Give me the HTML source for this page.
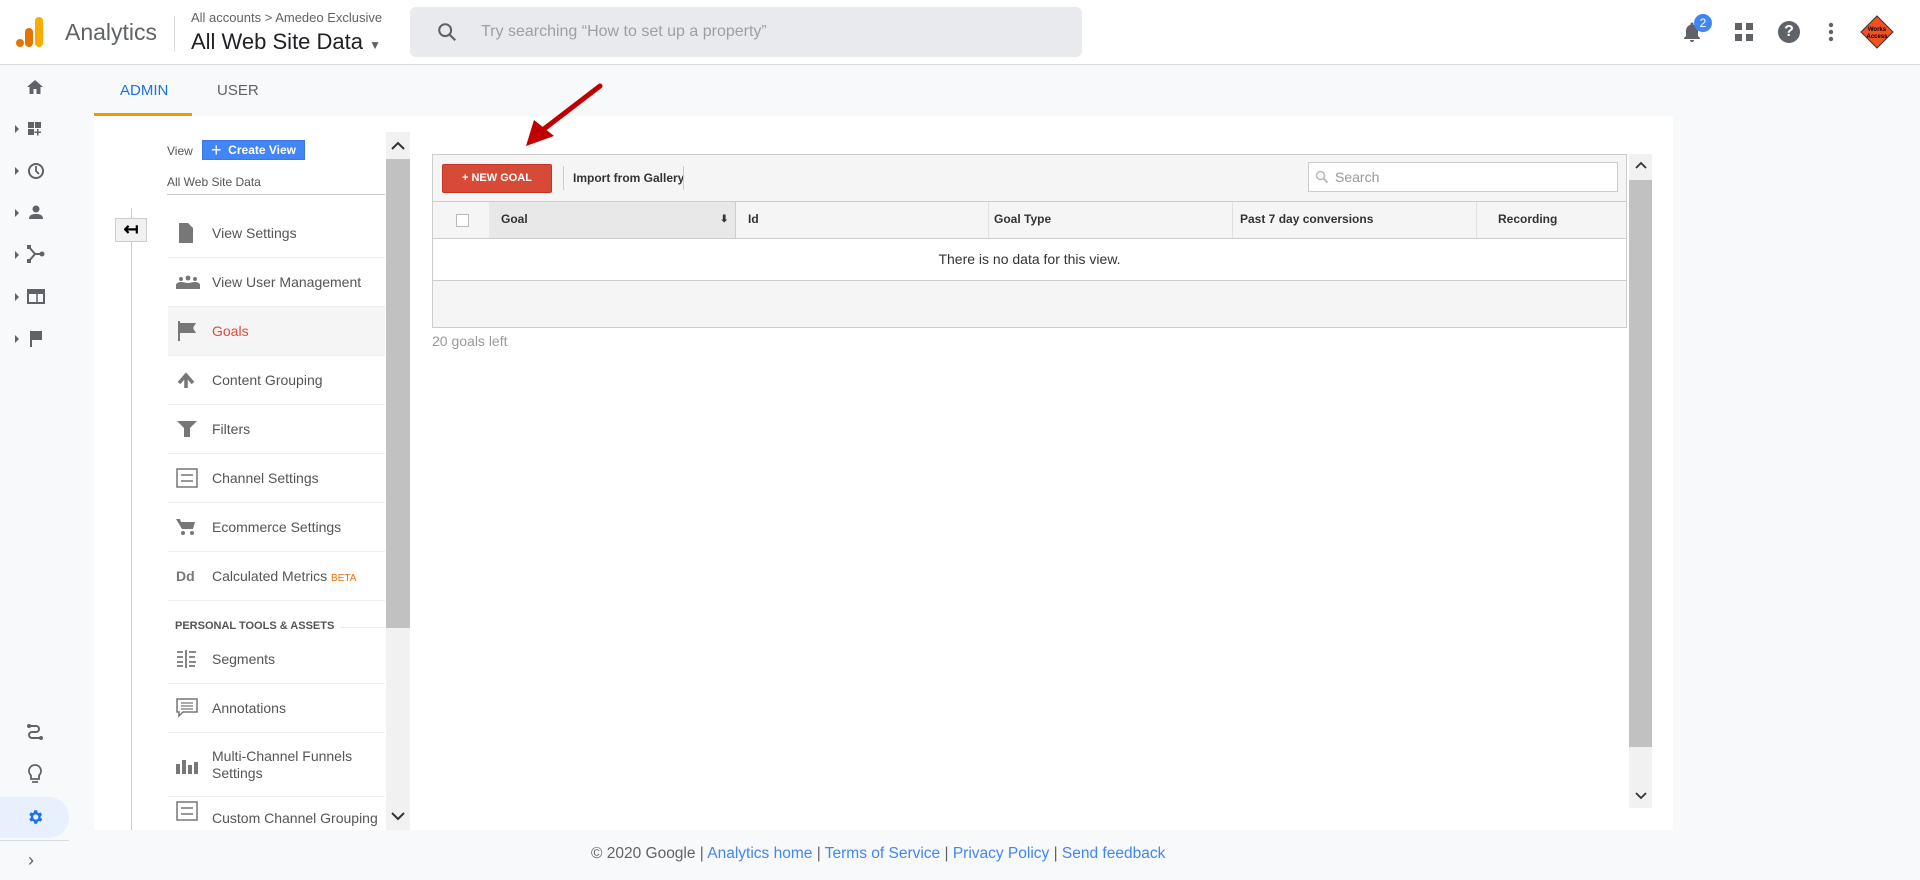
<!DOCTYPE html>
<html><head><meta charset="utf-8"><style>
*{box-sizing:border-box;margin:0;padding:0}
body{width:1920px;height:880px;overflow:hidden;background:#f8f9fa;font-family:"Liberation Sans",Arial,sans-serif;position:relative;color:#333}
.a{position:absolute}
.hdr{left:0;top:0;width:1920px;height:65px;background:#fff;border-bottom:1px solid #dadce0}
.mi{position:absolute;left:168px;width:217px;height:49px;border-bottom:1px solid #eee;font-size:14px;color:#555}
.mi span{position:absolute;left:44px;top:50%;transform:translateY(-50%)}
.mi svg{position:absolute;left:8px;top:50%;transform:translateY(-50%)}
.th{position:absolute;top:201px;height:37px;line-height:37px;font-size:12px;font-weight:bold;color:#333}
.ft a{color:#4285f4;text-decoration:none}
</style></head><body>
<div class="a hdr"></div>
<svg class="a" style="left:16px;top:17px" width="28" height="30" viewBox="0 0 28 30"><rect x="19" y="0" width="8" height="30" rx="4" fill="#f9ab00"/><rect x="9" y="11" width="8" height="19" rx="4" fill="#e37400"/><circle cx="4" cy="26" r="4" fill="#e37400"/></svg>
<div class="a" style="left:65px;top:19px;font-size:23px;color:#5f6368">Analytics</div>
<div class="a" style="left:174px;top:16px;width:1px;height:36px;background:#dadce0"></div>
<div class="a" style="left:191px;top:10px;font-size:13px;color:#5f6368">All accounts &gt; Amedeo Exclusive</div>
<div class="a" style="left:191px;top:29px;font-size:22px;color:#202124">All Web Site Data <span style="font-size:12px;color:#5f6368">▼</span></div>
<div class="a" style="left:410px;top:7px;width:672px;height:50px;background:#e8eaed;border-radius:6px"></div>
<svg class="a" style="left:436px;top:21px" width="22" height="22" viewBox="0 0 24 24"><circle cx="10" cy="10" r="6.5" stroke="#5f6368" stroke-width="2.2" fill="none"/><path d="M15 15l6 6" stroke="#5f6368" stroke-width="2.4"/></svg>
<div class="a" style="left:481px;top:23px;font-size:16px;color:#9aa0a6">Try searching “How to set up a property”</div>
<svg class="a" style="left:1680px;top:20px" width="24" height="24" viewBox="0 0 24 24"><path d="M12 22a2 2 0 0 0 2-2h-4a2 2 0 0 0 2 2zm6-6V11c0-3-1.6-5.6-4.5-6.3V4a1.5 1.5 0 0 0-3 0v.7C7.6 5.4 6 8 6 11v5l-2 2v1h16v-1z" fill="#5f6368"/></svg>
<div class="a" style="left:1694px;top:14px;width:18px;height:18px;border-radius:50%;background:#4285f4;color:#fff;font-size:12px;text-align:center;line-height:18px">2</div>
<svg class="a" style="left:1735px;top:23px" width="18" height="18" viewBox="0 0 18 18" fill="#5f6368"><rect width="7" height="7"/><rect x="11" width="7" height="7"/><rect y="11" width="7" height="7"/><rect x="11" y="11" width="7" height="7"/></svg>
<div class="a" style="left:1778px;top:21px;width:22px;height:22px;border-radius:50%;background:#5f6368;color:#fff;font-weight:bold;font-size:16px;text-align:center;line-height:22px">?</div>
<svg class="a" style="left:1827px;top:22px" width="8" height="20" viewBox="0 0 8 20" fill="#5f6368"><circle cx="4" cy="3" r="2.2"/><circle cx="4" cy="10" r="2.2"/><circle cx="4" cy="17" r="2.2"/></svg>
<svg class="a" style="left:1860px;top:15px" width="34" height="34" viewBox="0 0 34 34"><path d="M17 1L33 17L17 33L1 17Z" fill="#f4511e" stroke="#333" stroke-width="1"/><text x="17" y="16" font-size="6" text-anchor="middle" font-family="Liberation Sans" font-weight="bold">Works</text><text x="17" y="23" font-size="6" text-anchor="middle" font-family="Liberation Sans" font-weight="bold">Access</text></svg>
<svg class="a" style="left:0;top:75px" width="69" height="280" viewBox="0 0 69 280" fill="#5f6368">
<path d="M35 5l-8 7h2.5v7h4v-5h3v5h4v-7h2.5z"/>
<path d="M15 50l4 4-4 4z"/><rect x="28" y="47" width="6" height="6"/><rect x="35" y="47" width="6" height="6"/><rect x="28" y="54" width="6" height="6"/><path d="M37 54h1.5v2.5h2.5v1.5h-2.5v2.5h-1.5v-2.5h-2.5v-1.5h2.5z"/>
<path d="M15 92l4 4-4 4z"/><circle cx="36" cy="96" r="7" fill="none" stroke="#5f6368" stroke-width="2"/><path d="M36 91v5l3 3" stroke="#5f6368" stroke-width="1.8" fill="none"/>
<path d="M15 134l4 4-4 4z"/><circle cx="36" cy="134" r="3.5"/><path d="M29 144c0-4 3-5 7-5s7 1 7 5z"/>
<path d="M15 176l4 4-4 4z"/><path d="M29 172l6 7-6 7M35 179h7" stroke="#5f6368" stroke-width="2" fill="none"/><circle cx="42" cy="179" r="2.5"/><rect x="27" y="170" width="4" height="4"/><rect x="27" y="184" width="4" height="4"/>
<path d="M15 218l4 4-4 4z"/><rect x="28" y="215" width="16" height="13" fill="none" stroke="#5f6368" stroke-width="2"/><rect x="28" y="215" width="16" height="4"/><path d="M37 219v9" stroke="#5f6368" stroke-width="1.5"/>
<path d="M15 260l4 4-4 4z"/><path d="M30 256h12v9h-10v7h-2z"/>
</svg>
<svg class="a" style="left:0;top:720px" width="69" height="40" viewBox="0 0 69 40"><path d="M30 6h6a3 3 0 0 1 0 6h-4a3 3 0 0 0 0 6h8" stroke="#5f6368" stroke-width="2" fill="none"/><circle cx="29" cy="6" r="2" fill="#5f6368"/><circle cx="41" cy="18" r="2" fill="#5f6368"/></svg>
<svg class="a" style="left:26px;top:763px" width="18" height="22" viewBox="0 0 18 22"><path d="M9 2a6 6 0 0 0-4 10.5V16h8v-3.5A6 6 0 0 0 9 2zM6 19h6" stroke="#5f6368" stroke-width="1.8" fill="none"/></svg>
<div class="a" style="left:0;top:797px;width:69px;height:41px;background:#e8f0fe;border-radius:0 21px 21px 0"></div>
<svg class="a" style="left:26px;top:808px" width="18" height="18" viewBox="0 0 24 24"><path d="M19.4 13a7.5 7.5 0 0 0 0-2l2.1-1.6-2-3.5-2.5 1a7 7 0 0 0-1.7-1L15 3h-4l-.4 2.6a7 7 0 0 0-1.7 1l-2.5-1-2 3.5L6.5 11a7.5 7.5 0 0 0 0 2l-2.1 1.6 2 3.5 2.5-1a7 7 0 0 0 1.7 1L11 21h4l.4-2.6a7 7 0 0 0 1.7-1l2.5 1 2-3.5zM13 15.5a3.5 3.5 0 1 1 0-7 3.5 3.5 0 0 1 0 7z" fill="#1a73e8"/></svg>
<div class="a" style="left:0;top:840px;width:69px;height:1px;background:#dadce0"></div>
<div class="a" style="left:28px;top:850px;font-size:18px;color:#5f6368">›</div>
<div class="a" style="left:120px;top:82px;font-size:15px;color:#1a73e8">ADMIN</div>
<div class="a" style="left:217px;top:82px;font-size:15px;color:#5f6368">USER</div>
<div class="a" style="left:94px;top:113px;width:98px;height:3px;background:#f29900"></div>
<div class="a" style="left:94px;top:116px;width:1579px;height:714px;background:#fff"></div>
<div class="a" style="left:131px;top:208px;width:1px;height:622px;background:#ccc"></div>
<div class="a" style="left:115px;top:218px;width:32px;height:24px;background:#f1f1f1;border:1px solid #ccc;font-size:18px;text-align:center;line-height:20px;color:#000;font-weight:bold">↤</div>
<div class="a" style="left:167px;top:144px;font-size:12px;color:#555">View</div>
<div class="a" style="left:202px;top:140px;width:103px;height:20px;background:#4285f4;border:1px solid #3b78e7;color:#fff;font-size:12px;font-weight:bold;line-height:18px;padding-left:8px"><span style="font-size:18px;font-weight:normal;vertical-align:-2px">+</span>&nbsp; Create View</div>
<div class="a" style="left:167px;top:175px;font-size:12px;color:#555">All Web Site Data</div>
<div class="a" style="left:167px;top:194px;width:218px;height:1px;background:#ccc"></div>
<div class="mi" style="top:209px"><svg width="20" height="22" viewBox="0 0 20 22"><path d="M3 1h9l5 5v15H3z" fill="#777"/></svg><span>View Settings</span></div>
<div class="mi" style="top:258px"><svg width="24" height="14" viewBox="0 0 24 14" fill="#777"><circle cx="12" cy="3" r="2.5"/><circle cx="5" cy="4" r="2"/><circle cx="19" cy="4" r="2"/><path d="M0 14v-4c0-2 3-3 5-3s5 1 7 1 5-1 7-1 5 1 5 3v4z"/></svg><span>View User Management</span></div>
<div class="mi" style="top:307px;background:#f5f5f5"><svg width="22" height="20" viewBox="0 0 22 20"><path d="M2 0h2v20H2zM4 2h16l-3 5 3 5H4z" fill="#777"/></svg><span style="color:#dd4b39">Goals</span></div>
<div class="mi" style="top:356px"><svg width="20" height="18" viewBox="0 0 20 18"><path d="M3 12l7-8 7 8M10 4v13" stroke="#777" stroke-width="3.5" fill="none"/></svg><span>Content Grouping</span></div>
<div class="mi" style="top:405px"><svg width="22" height="18" viewBox="0 0 22 18"><path d="M1 1h20l-7 7v9h-6V8z" fill="#777"/></svg><span>Filters</span></div>
<div class="mi" style="top:454px"><svg width="22" height="20" viewBox="0 0 22 20"><rect x="1" y="1" width="20" height="18" fill="none" stroke="#777" stroke-width="1.5"/><path d="M5 7h12M5 13h12" stroke="#777" stroke-width="1.5"/></svg><span>Channel Settings</span></div>
<div class="mi" style="top:503px"><svg width="20" height="18" viewBox="0 0 20 18" fill="#777"><path d="M0 1h4l1 3h14l-2 7H6z"/><circle cx="7" cy="15" r="2"/><circle cx="16" cy="15" r="2"/></svg><span>Ecommerce Settings</span></div>
<div class="mi" style="top:552px"><svg width="24" height="14" viewBox="0 0 24 14"><text x="0" y="12" font-size="14" font-weight="bold" fill="#777" font-family="Liberation Sans">Dd</text></svg><span>Calculated Metrics <small style="color:#e8710a;font-size:10px">BETA</small></span></div>
<div class="a" style="left:175px;top:620px;font-size:11px;font-weight:bold;color:#555">PERSONAL TOOLS &amp; ASSETS</div>
<div class="a" style="left:340px;top:627px;width:45px;height:1px;background:#eee"></div>
<div class="mi" style="top:635px"><svg width="22" height="18" viewBox="0 0 22 18"><path d="M1 2h6M1 7h6M1 12h6M1 16h6M10 0v18M13 2h7M13 7h6M13 12h7M13 16h6" stroke="#777" stroke-width="1.8"/></svg><span>Segments</span></div>
<div class="mi" style="top:684px"><svg width="22" height="20" viewBox="0 0 22 20"><path d="M1 1h20v13H7l-4 4v-4H1z" fill="none" stroke="#777" stroke-width="1.5"/><path d="M5 5h12M5 8h12M5 11h12" stroke="#777" stroke-width="1.2"/></svg><span>Annotations</span></div>
<div class="mi" style="top:733px;height:64px"><svg width="22" height="18" viewBox="0 0 22 18" fill="#777"><rect x="0" y="8" width="4" height="10"/><rect x="6" y="4" width="4" height="14"/><rect x="12" y="9" width="4" height="9"/><rect x="18" y="6" width="4" height="12"/></svg><span style="line-height:17px">Multi-Channel Funnels<br>Settings</span></div>
<div class="mi" style="top:797px;height:33px;border:none;overflow:hidden"><svg style="top:14px" width="22" height="20" viewBox="0 0 22 20"><rect x="1" y="1" width="20" height="18" fill="none" stroke="#777" stroke-width="1.5"/><path d="M5 7h12M5 13h12" stroke="#777" stroke-width="1.5"/></svg><span style="top:21px">Custom Channel Grouping</span></div>
<div class="a" style="left:386px;top:132px;width:24px;height:698px;background:#f1f1f1"></div>
<div class="a" style="left:386px;top:159px;width:24px;height:469px;background:#c1c1c1"></div>
<svg class="a" style="left:390px;top:140px" width="16" height="12" viewBox="0 0 16 12"><path d="M2 9l6-6 6 6" stroke="#333" stroke-width="2" fill="none"/></svg>
<svg class="a" style="left:390px;top:810px" width="16" height="12" viewBox="0 0 16 12"><path d="M2 3l6 6 6-6" stroke="#333" stroke-width="2" fill="none"/></svg>
<div class="a" style="left:432px;top:154px;width:1195px;height:174px;border:1px solid #ccc;background:#f5f5f5"></div>
<div class="a" style="left:442px;top:164px;width:110px;height:29px;background:#d84a38;border:1px solid #c23321;border-radius:2px;color:#fff;font-size:11px;font-weight:bold;text-align:center;line-height:27px">+ NEW GOAL</div>
<div class="a" style="left:563px;top:166px;width:1px;height:24px;background:#ccc"></div>
<div class="a" style="left:573px;top:171px;font-size:12px;font-weight:bold;color:#333">Import from Gallery</div>
<div class="a" style="left:683px;top:166px;width:1px;height:24px;background:#ccc"></div>
<div class="a" style="left:1308px;top:162px;width:310px;height:30px;background:#fff;border:1px solid #ccc"></div>
<svg class="a" style="left:1315px;top:170px" width="14" height="14" viewBox="0 0 14 14"><circle cx="5.5" cy="5.5" r="4" stroke="#bbb" stroke-width="1.6" fill="none"/><path d="M8.5 8.5l4 4" stroke="#bbb" stroke-width="2"/></svg>
<div class="a" style="left:1335px;top:169px;font-size:14px;color:#999">Search</div>
<div class="a" style="left:433px;top:201px;width:1193px;height:1px;background:#ccc"></div>
<div class="a" style="left:489px;top:202px;width:247px;height:36px;background:#e8e8e8;border-right:1px solid #ccc"></div>
<div class="a" style="left:456px;top:214px;width:13px;height:13px;border:1px solid #bbb;background:#fff"></div>
<div class="th" style="left:501px">Goal</div>
<div class="th" style="left:720px;font-size:10px">⬇</div>
<div class="th" style="left:748px">Id</div>
<div class="th" style="left:994px">Goal Type</div>
<div class="th" style="left:1240px">Past 7 day conversions</div>
<div class="th" style="left:1498px">Recording</div>
<div class="a" style="left:988px;top:202px;width:1px;height:36px;background:#e0e0e0"></div>
<div class="a" style="left:1232px;top:202px;width:1px;height:36px;background:#e0e0e0"></div>
<div class="a" style="left:1476px;top:202px;width:1px;height:36px;background:#e0e0e0"></div>
<div class="a" style="left:433px;top:238px;width:1193px;height:43px;background:#fff;border-top:1px solid #ccc;border-bottom:1px solid #ccc;text-align:center;line-height:41px;font-size:14px;color:#333">There is no data for this view.</div>
<div class="a" style="left:432px;top:333px;font-size:14px;color:#999">20 goals left</div>
<div class="a" style="left:1629px;top:154px;width:23px;height:654px;background:#f1f1f1"></div>
<div class="a" style="left:1629px;top:180px;width:23px;height:567px;background:#c1c1c1"></div>
<svg class="a" style="left:1633px;top:160px" width="16" height="12" viewBox="0 0 16 12"><path d="M3 8l5-5 5 5" stroke="#333" stroke-width="1.8" fill="none"/></svg>
<svg class="a" style="left:1633px;top:789px" width="16" height="12" viewBox="0 0 16 12"><path d="M3 4l5 5 5-5" stroke="#333" stroke-width="1.8" fill="none"/></svg>
<svg class="a" style="left:510px;top:80px" width="100" height="75" viewBox="0 0 100 75"><path d="M90 6L30 52" stroke="#c00000" stroke-width="5" stroke-linecap="round"/><path d="M16 66L24 40L44 56Z" fill="#c00000"/></svg>
<div class="a ft" style="left:591px;top:845px;font-size:15.5px;color:#5f6368">© 2020 Google | <a>Analytics home</a> | <a>Terms of Service</a> | <a>Privacy Policy</a> | <a>Send feedback</a></div>
</body></html>
